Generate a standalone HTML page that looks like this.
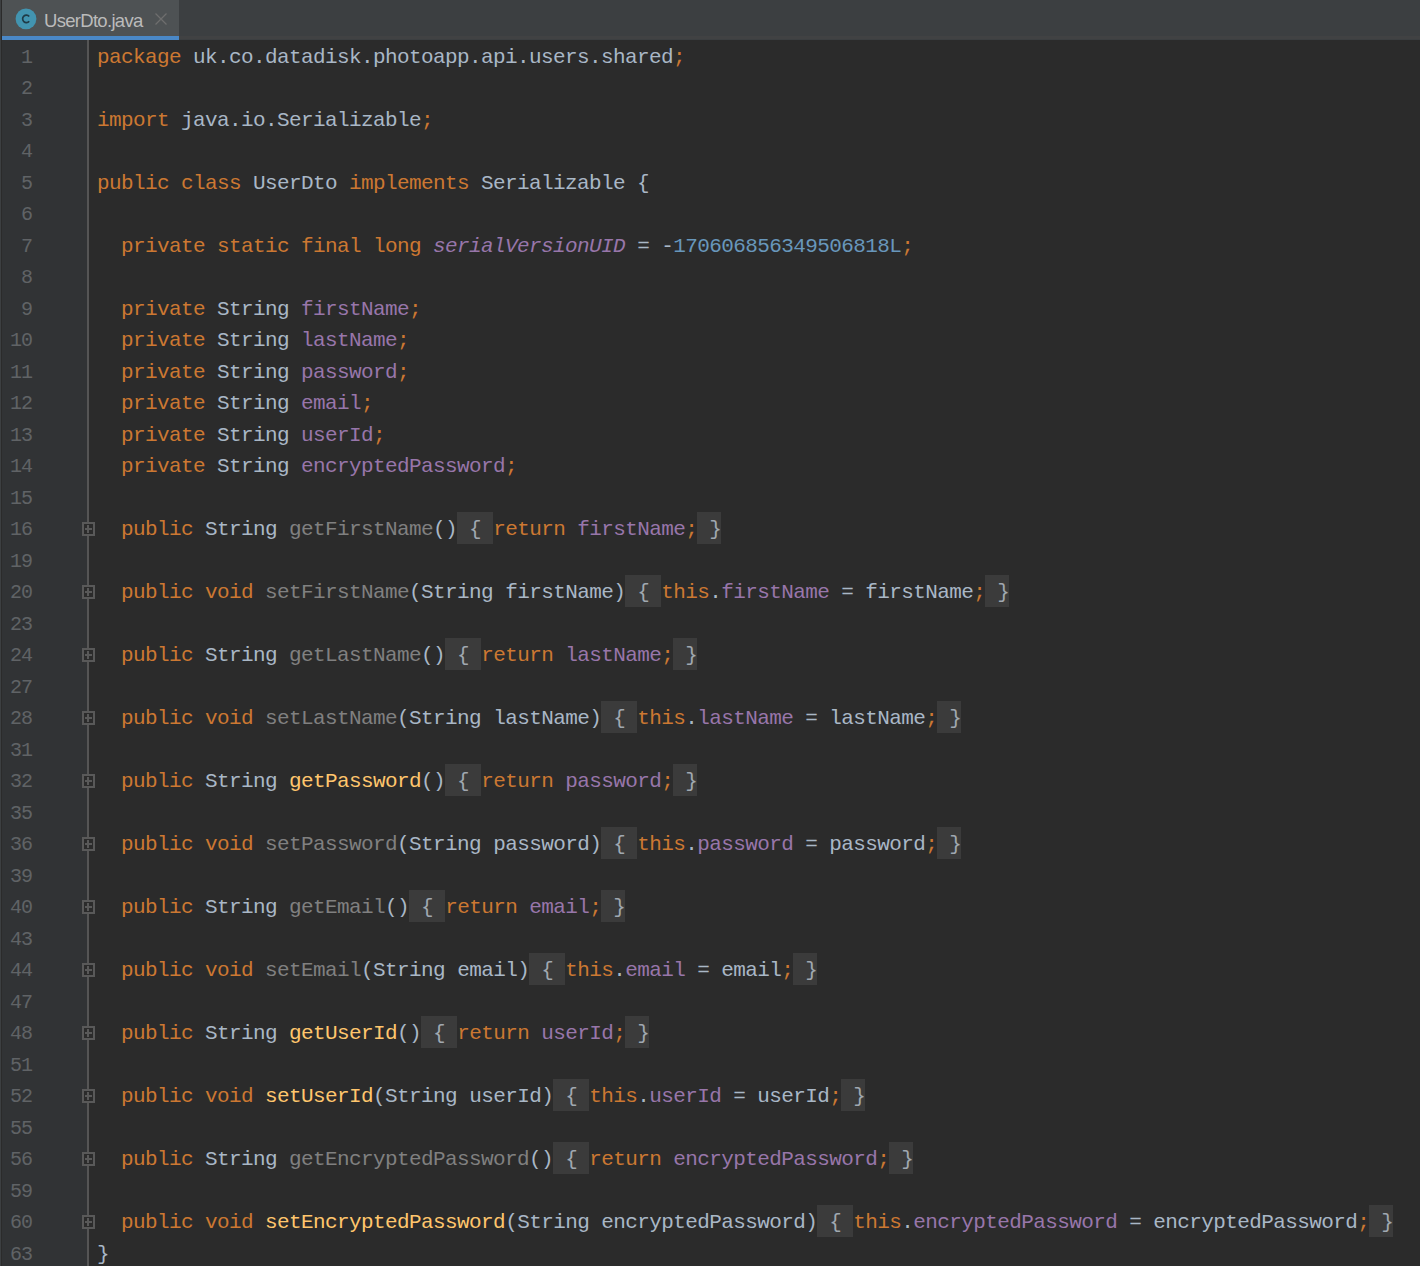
<!DOCTYPE html>
<html><head><meta charset="utf-8">
<style>
html,body{margin:0;padding:0;}
body{width:1420px;height:1266px;overflow:hidden;background:#2B2B2B;position:relative;font-family:"Liberation Mono",monospace;}
#tabbar{position:absolute;left:0;top:0;width:1420px;height:40px;background:#3C3F41;}
#tabbar .edge{position:absolute;left:0;top:0;width:1px;height:1266px;background:#3C3F41;border-right:1px solid #2B2B2B;z-index:5;}
#tabbar .band{position:absolute;left:179px;top:36px;width:1241px;height:3px;background:#414243;}
#tab{position:absolute;left:2px;top:0;width:177px;height:40px;background:#4E5254;}
#tab .ul{position:absolute;left:0;top:36px;width:177px;height:4px;background:#4A88C7;}
#tab .ic{position:absolute;left:15px;top:8px;width:21px;height:21px;border-radius:50%;background:#419BB5;}
#tab .ic span{position:absolute;left:0;top:0;width:21px;height:21px;line-height:21px;text-align:center;font-family:"Liberation Sans",sans-serif;font-size:13px;font-weight:bold;color:#1C3A48;}
#tab .tt{position:absolute;left:42px;top:10px;font-family:"Liberation Sans",sans-serif;font-size:18.5px;letter-spacing:-0.7px;line-height:22px;color:#BBBBBB;white-space:pre;}
#tab .x{position:absolute;left:151px;top:11px;}
#gutter{position:absolute;left:0;top:40px;width:87px;height:1226px;background:#313335;}

#sep{position:absolute;left:87px;top:40px;width:2px;height:1226px;background:#555555;}
.ln{position:absolute;left:0;width:32px;text-align:right;font-size:20px;letter-spacing:-1px;line-height:31.5px;height:31.5px;color:#606366;white-space:pre;}
.code{position:absolute;left:97px;font-size:21px;letter-spacing:-0.6px;line-height:31.5px;height:31.5px;color:#A9B7C6;white-space:pre;}
.fold{position:absolute;left:82px;width:9px;height:10px;border:2px solid #595959;background:#2B2B2B;}
.fold:before{content:"";position:absolute;left:1px;top:4px;width:7px;height:2px;background:#595959;}
.fold:after{content:"";position:absolute;left:3px;top:1px;width:2px;height:8px;background:#595959;}
.k{color:#CC7832;}
.f{color:#9876AA;}
.i{color:#9876AA;font-style:italic;}
.n{color:#6897BB;}
.y{color:#FFC66D;}
.g{color:#808080;}
.b{background:#3B3B3B;color:#A0A8B0;display:inline-block;height:30px;padding-top:2px;margin-top:-2px;vertical-align:top;}
</style></head><body>
<div id="tabbar"><div class="edge"></div><div class="band"></div>
<div id="tab"><div class="tt">UserDto.java</div>
<svg class="icn" width="40" height="40" viewBox="0 0 40 40" style="position:absolute;left:-2px;top:0"><circle cx="26" cy="18.8" r="10.4" fill="#4294B0"/><path d="M29.2 16.5 A3.7 3.7 0 1 0 29.2 21.2" stroke="#1F3B47" stroke-width="1.7" fill="none"/></svg>
<svg class="x" width="16" height="16" viewBox="0 0 16 16"><path d="M2.5 2.5 L13.5 13.5 M13.5 2.5 L2.5 13.5" stroke="#6E6E6E" stroke-width="1.3" fill="none"/></svg>
<div class="ul"></div></div></div>
<div id="gutter"></div>
<div id="sep"></div>

<div class="ln" style="top:42px">1</div>
<div class="code" style="top:42px"><span class="k">package</span> uk.co.datadisk.photoapp.api.users.shared<span class="k">;</span></div>
<div class="ln" style="top:73px">2</div>
<div class="ln" style="top:105px">3</div>
<div class="code" style="top:105px"><span class="k">import</span> java.io.Serializable<span class="k">;</span></div>
<div class="ln" style="top:136px">4</div>
<div class="ln" style="top:168px">5</div>
<div class="code" style="top:168px"><span class="k">public class</span> UserDto <span class="k">implements</span> Serializable {</div>
<div class="ln" style="top:199px">6</div>
<div class="ln" style="top:231px">7</div>
<div class="code" style="top:231px">  <span class="k">private static final long</span> <span class="i">serialVersionUID</span> = -<span class="n">170606856349506818L</span><span class="k">;</span></div>
<div class="ln" style="top:262px">8</div>
<div class="ln" style="top:294px">9</div>
<div class="code" style="top:294px">  <span class="k">private</span> String <span class="f">firstName</span><span class="k">;</span></div>
<div class="ln" style="top:325px">10</div>
<div class="code" style="top:325px">  <span class="k">private</span> String <span class="f">lastName</span><span class="k">;</span></div>
<div class="ln" style="top:357px">11</div>
<div class="code" style="top:357px">  <span class="k">private</span> String <span class="f">password</span><span class="k">;</span></div>
<div class="ln" style="top:388px">12</div>
<div class="code" style="top:388px">  <span class="k">private</span> String <span class="f">email</span><span class="k">;</span></div>
<div class="ln" style="top:420px">13</div>
<div class="code" style="top:420px">  <span class="k">private</span> String <span class="f">userId</span><span class="k">;</span></div>
<div class="ln" style="top:451px">14</div>
<div class="code" style="top:451px">  <span class="k">private</span> String <span class="f">encryptedPassword</span><span class="k">;</span></div>
<div class="ln" style="top:483px">15</div>
<div class="ln" style="top:514px">16</div>
<div class="code" style="top:514px">  <span class="k">public</span> String <span class="g">getFirstName</span>()<span class="b"> { </span><span class="k">return</span> <span class="f">firstName</span><span class="k">;</span><span class="b"> }</span></div>
<div class="fold" style="top:521.5px"></div>
<div class="ln" style="top:546px">19</div>
<div class="ln" style="top:577px">20</div>
<div class="code" style="top:577px">  <span class="k">public</span> <span class="k">void</span> <span class="g">setFirstName</span>(String firstName)<span class="b"> { </span><span class="k">this</span>.<span class="f">firstName</span> = firstName<span class="k">;</span><span class="b"> }</span></div>
<div class="fold" style="top:584.5px"></div>
<div class="ln" style="top:609px">23</div>
<div class="ln" style="top:640px">24</div>
<div class="code" style="top:640px">  <span class="k">public</span> String <span class="g">getLastName</span>()<span class="b"> { </span><span class="k">return</span> <span class="f">lastName</span><span class="k">;</span><span class="b"> }</span></div>
<div class="fold" style="top:647.5px"></div>
<div class="ln" style="top:672px">27</div>
<div class="ln" style="top:703px">28</div>
<div class="code" style="top:703px">  <span class="k">public</span> <span class="k">void</span> <span class="g">setLastName</span>(String lastName)<span class="b"> { </span><span class="k">this</span>.<span class="f">lastName</span> = lastName<span class="k">;</span><span class="b"> }</span></div>
<div class="fold" style="top:710.5px"></div>
<div class="ln" style="top:735px">31</div>
<div class="ln" style="top:766px">32</div>
<div class="code" style="top:766px">  <span class="k">public</span> String <span class="y">getPassword</span>()<span class="b"> { </span><span class="k">return</span> <span class="f">password</span><span class="k">;</span><span class="b"> }</span></div>
<div class="fold" style="top:773.5px"></div>
<div class="ln" style="top:798px">35</div>
<div class="ln" style="top:829px">36</div>
<div class="code" style="top:829px">  <span class="k">public</span> <span class="k">void</span> <span class="g">setPassword</span>(String password)<span class="b"> { </span><span class="k">this</span>.<span class="f">password</span> = password<span class="k">;</span><span class="b"> }</span></div>
<div class="fold" style="top:836.5px"></div>
<div class="ln" style="top:861px">39</div>
<div class="ln" style="top:892px">40</div>
<div class="code" style="top:892px">  <span class="k">public</span> String <span class="g">getEmail</span>()<span class="b"> { </span><span class="k">return</span> <span class="f">email</span><span class="k">;</span><span class="b"> }</span></div>
<div class="fold" style="top:899.5px"></div>
<div class="ln" style="top:924px">43</div>
<div class="ln" style="top:955px">44</div>
<div class="code" style="top:955px">  <span class="k">public</span> <span class="k">void</span> <span class="g">setEmail</span>(String email)<span class="b"> { </span><span class="k">this</span>.<span class="f">email</span> = email<span class="k">;</span><span class="b"> }</span></div>
<div class="fold" style="top:962.5px"></div>
<div class="ln" style="top:987px">47</div>
<div class="ln" style="top:1018px">48</div>
<div class="code" style="top:1018px">  <span class="k">public</span> String <span class="y">getUserId</span>()<span class="b"> { </span><span class="k">return</span> <span class="f">userId</span><span class="k">;</span><span class="b"> }</span></div>
<div class="fold" style="top:1025.5px"></div>
<div class="ln" style="top:1050px">51</div>
<div class="ln" style="top:1081px">52</div>
<div class="code" style="top:1081px">  <span class="k">public</span> <span class="k">void</span> <span class="y">setUserId</span>(String userId)<span class="b"> { </span><span class="k">this</span>.<span class="f">userId</span> = userId<span class="k">;</span><span class="b"> }</span></div>
<div class="fold" style="top:1088.5px"></div>
<div class="ln" style="top:1113px">55</div>
<div class="ln" style="top:1144px">56</div>
<div class="code" style="top:1144px">  <span class="k">public</span> String <span class="g">getEncryptedPassword</span>()<span class="b"> { </span><span class="k">return</span> <span class="f">encryptedPassword</span><span class="k">;</span><span class="b"> }</span></div>
<div class="fold" style="top:1151.5px"></div>
<div class="ln" style="top:1176px">59</div>
<div class="ln" style="top:1207px">60</div>
<div class="code" style="top:1207px">  <span class="k">public</span> <span class="k">void</span> <span class="y">setEncryptedPassword</span>(String encryptedPassword)<span class="b"> { </span><span class="k">this</span>.<span class="f">encryptedPassword</span> = encryptedPassword<span class="k">;</span><span class="b"> }</span></div>
<div class="fold" style="top:1214.5px"></div>
<div class="ln" style="top:1239px">63</div>
<div class="code" style="top:1239px">}</div>
</body></html>
